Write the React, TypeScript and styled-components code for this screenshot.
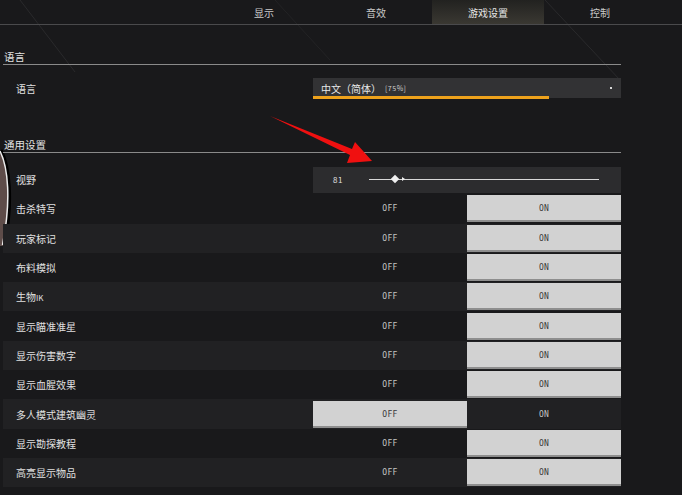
import React from "react";
import styled, { createGlobalStyle } from "styled-components";

const Global = createGlobalStyle`
  html, body { margin: 0; padding: 0; background: #18181a; }
  body { font-family: "Noto Sans CJK SC", "Noto Sans", sans-serif; }
`;

const Screen = styled.div`
  position: relative;
  width: 682px;
  height: 495px;
  overflow: hidden;
  background: #19191b;
  color: #dcdcdc;
`;

const BgArt = styled.svg`
  position: absolute;
  left: 0;
  top: 0;
  width: 682px;
  height: 495px;
  pointer-events: none;
`;

const Overlay = styled.svg`
  position: absolute;
  left: 0;
  top: 0;
  width: 682px;
  height: 495px;
  pointer-events: none;
`;

const Content = styled.div`
  position: relative;
  display: flex;
  flex-direction: column;
`;

const TabBar = styled.div`
  display: flex;
  height: 24px;
  padding-left: 208px;
  border-bottom: 1px solid #4a4a4c;
`;

const Tab = styled.div<{ $active?: boolean }>`
  width: 112px;
  display: flex;
  align-items: center;
  justify-content: center;
  font-size: 10px;
  color: ${(p) => (p.$active ? "#e6e6e6" : "#c9c9c9")};
  background: ${(p) =>
    p.$active ? "linear-gradient(to bottom, #222220, #3a3832)" : "transparent"};
`;

const Body = styled.div`
  width: 618px;
  padding-left: 3px;
  display: flex;
  flex-direction: column;
`;

const SectionHeader = styled.div<{ $top: number }>`
  margin-top: ${(p) => p.$top}px;
  height: 14px;
  line-height: 14px;
  padding-left: 1px;
  font-size: 10.5px;
  color: #e2e2e2;
  border-bottom: 1px solid #8a8a8a;
`;

const Row = styled.div<{ $shade?: boolean; $h?: number }>`
  display: flex;
  align-items: center;
  height: ${(p) => p.$h ?? 29.3}px;
  background: ${(p) => (p.$shade ? "#212123" : "transparent")};
`;

const Label = styled.div`
  width: 297px;
  padding-left: 13px;
  font-size: 10px;
  color: #e0e0e0;
  white-space: nowrap;
`;

const Latin = styled.span`
  font-size: 8px;
`;

const Dropdown = styled.div`
  position: relative;
  width: 308px;
  height: 20px;
  background: #323234;
  display: flex;
  align-items: center;
  padding-left: 8px;
  box-sizing: border-box;
  font-size: 10px;
  color: #e8e8e8;
`;

const Small = styled.span`
  font-size: 7px;
  margin-left: 4px;
  letter-spacing: 0.5px;
  color: #d0d0d0;
`;

const Progress = styled.div`
  position: absolute;
  left: 0;
  bottom: -1px;
  height: 3px;
  background: #eea21c;
`;

const Dot = styled.div`
  position: absolute;
  right: 9px;
  top: 9px;
  width: 2px;
  height: 2px;
  background: #d8d8d8;
`;

const SliderBox = styled.div`
  width: 308px;
  height: 26px;
  background: #2c2c2e;
  display: flex;
  align-items: center;
`;

const SliderValue = styled.div`
  width: 56px;
  padding-left: 20px;
  box-sizing: border-box;
  font-size: 8px;
  color: #e0e0e0;
  letter-spacing: 0.5px;
`;

const Track = styled.div`
  position: relative;
  width: 230px;
  height: 1px;
  background: #d8d8d8;
`;

const Thumb = styled.div`
  position: absolute;
  left: 23px;
  top: -3.5px;
  width: 6px;
  height: 6px;
  background: #f0f0f0;
  transform: rotate(45deg);
`;

const Tick = styled.div`
  position: absolute;
  left: 33px;
  top: -2px;
  width: 0;
  height: 0;
  border-top: 2.5px solid transparent;
  border-bottom: 2.5px solid transparent;
  border-left: 3px solid #f0f0f0;
`;

const Toggle = styled.div`
  display: flex;
  width: 308px;
  height: 27px;
`;

const Cell = styled.div<{ $on?: boolean }>`
  flex: 1;
  display: flex;
  align-items: center;
  justify-content: center;
  font-family: "DejaVu Sans Mono", "Liberation Mono", monospace;
  font-size: 8px;
  letter-spacing: 0.3px;
  color: ${(p) => (p.$on ? "#3a3a3a" : "#c4c4c4")};
  background: ${(p) => (p.$on ? "#d2d2d2" : "transparent")};
  box-shadow: ${(p) => (p.$on ? "inset 0 -2px 0 #8e8e8e" : "none")};
`;

const toggles: { label: React.ReactNode; key: string; on: boolean }[] = [
  { key: "a", label: "击杀特写", on: true },
  { key: "b", label: "玩家标记", on: true },
  { key: "c", label: "布料模拟", on: true },
  { key: "d", label: <>生物<Latin>IK</Latin></>, on: true },
  { key: "e", label: "显示瞄准准星", on: true },
  { key: "f", label: "显示伤害数字", on: true },
  { key: "g", label: "显示血腥效果", on: true },
  { key: "h", label: "多人模式建筑幽灵", on: false },
  { key: "i", label: "显示勘探教程", on: true },
  { key: "j", label: "高亮显示物品", on: true },
];

export default function App() {
  return (
    <Screen>
      <Global />
      <BgArt viewBox="0 0 682 495">
        <line x1="20" y1="0" x2="75" y2="72" stroke="#2a2a2c" strokeWidth="1" />
        <line x1="275" y1="0" x2="330" y2="60" stroke="#232325" strokeWidth="1" />
        <line x1="545" y1="0" x2="620" y2="80" stroke="#2a2a2c" strokeWidth="1" />
        <path d="M0 150 C8 166 12 200 3 246 L0 246 Z" fill="#5e4c49" />
        <path d="M1 150 C9.5 166 13.5 200 4.5 246" fill="none" stroke="#000" strokeWidth="3" />
        <path d="M0 151 C8 167 11.5 200 2.5 245" fill="none" stroke="#ececec" strokeWidth="1.5" />
      </BgArt>
      <Content>
        <TabBar>
          <Tab>显示</Tab>
          <Tab>音效</Tab>
          <Tab $active>游戏设置</Tab>
          <Tab>控制</Tab>
        </TabBar>
        <Body>
          <SectionHeader $top={25}>语言</SectionHeader>
          <Row $h={20} style={{ marginTop: 13 }}>
            <Label>语言</Label>
            <Dropdown>
              中文（简体）<Small>[75%]</Small>
              <Progress style={{ width: `${(236 / 308) * 100}%` }} />
              <Dot />
            </Dropdown>
          </Row>
          <SectionHeader $top={40}>通用设置</SectionHeader>
          <Row style={{ marginTop: 12 }}>
            <Label>视野</Label>
            <SliderBox>
              <SliderValue>81</SliderValue>
              <Track>
                <Thumb />
                <Tick />
              </Track>
            </SliderBox>
          </Row>
          {toggles.map((t, i) => (
            <Row key={t.key} $shade={i % 2 === 1}>
              <Label>{t.label}</Label>
              <Toggle>
                <Cell $on={!t.on}>OFF</Cell>
                <Cell $on={t.on}>ON</Cell>
              </Toggle>
            </Row>
          ))}
        </Body>
      </Content>
      <Overlay viewBox="0 0 682 495">
        <polygon points="270,116 352,149 355,142 372,161 347,163 350,155" fill="#f01010" />
      </Overlay>
    </Screen>
  );
}
